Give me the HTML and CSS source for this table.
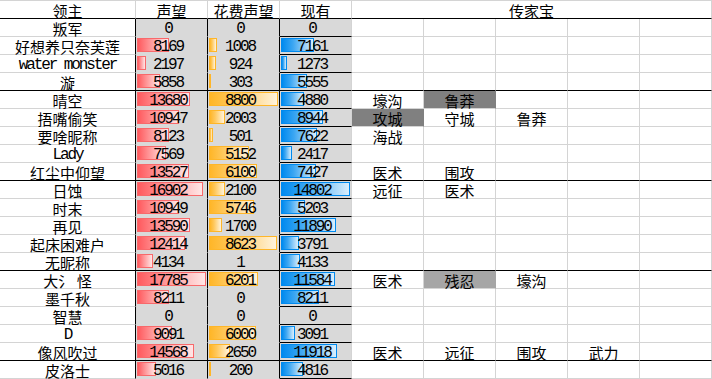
FILE: index.html
```html
<!DOCTYPE html>
<html lang="zh">
<head>
<meta charset="utf-8">
<title>领主声望</title>
<link rel="stylesheet" href="styles.css">
</head>
<body>
<div class="sheet">
  <div class="row head grp">
    <div class="c name">领主</div>
    <div class="c hd">声望</div>
    <div class="c hd">花费声望</div>
    <div class="c hd">现有</div>
    <div class="c heir">传家宝</div>
  </div>

  <div class="row">
    <div class="c name">叛军</div>
    <div class="c b num">0</div>
    <div class="c g num">0</div>
    <div class="c d num">0</div>
    <div class="c e"></div><div class="c e"></div><div class="c e"></div><div class="c e"></div><div class="c e"></div>
  </div>
  <div class="row">
    <div class="c name">好想养只奈芙莲</div>
    <div class="c b num"><i class="bar red" style="width:32px"></i><span>8169</span></div>
    <div class="c g num"><i class="bar org" style="width:8px"></i><span>1008</span></div>
    <div class="c d num"><i class="bar blu" style="width:33px"></i><span>7161</span></div>
    <div class="c e"></div><div class="c e"></div><div class="c e"></div><div class="c e"></div><div class="c e"></div>
  </div>
  <div class="row">
    <div class="c name lat">water monster</div>
    <div class="c b num"><i class="bar red" style="width:9px"></i><span>2197</span></div>
    <div class="c g num"><i class="bar org" style="width:7px"></i><span>924</span></div>
    <div class="c d num"><i class="bar blu" style="width:6px"></i><span>1273</span></div>
    <div class="c e"></div><div class="c e"></div><div class="c e"></div><div class="c e"></div><div class="c e"></div>
  </div>
  <div class="row grp">
    <div class="c name">漩</div>
    <div class="c b num"><i class="bar red" style="width:23px"></i><span>5858</span></div>
    <div class="c g num"><i class="bar org" style="width:2px"></i><span>303</span></div>
    <div class="c d num"><i class="bar blu" style="width:26px"></i><span>5555</span></div>
    <div class="c e"></div><div class="c e"></div><div class="c e"></div><div class="c e"></div><div class="c e"></div>
  </div>

  <div class="row">
    <div class="c name">晴空</div>
    <div class="c b num"><i class="bar red" style="width:53px"></i><span>13680</span></div>
    <div class="c g num"><i class="bar org" style="width:69px"></i><span>8800</span></div>
    <div class="c d num"><i class="bar blu" style="width:23px"></i><span>4880</span></div>
    <div class="c e">壕沟</div><div class="c e dark">鲁莽</div><div class="c e"></div><div class="c e"></div><div class="c e"></div>
  </div>
  <div class="row">
    <div class="c name">捂嘴偷笑</div>
    <div class="c b num"><i class="bar red" style="width:42px"></i><span>10947</span></div>
    <div class="c g num"><i class="bar org" style="width:16px"></i><span>2003</span></div>
    <div class="c d num"><i class="bar blu" style="width:42px"></i><span>8944</span></div>
    <div class="c e dark">攻城</div><div class="c e">守城</div><div class="c e">鲁莽</div><div class="c e"></div><div class="c e"></div>
  </div>
  <div class="row">
    <div class="c name">要啥昵称</div>
    <div class="c b num"><i class="bar red" style="width:32px"></i><span>8123</span></div>
    <div class="c g num"><i class="bar org" style="width:4px"></i><span>501</span></div>
    <div class="c d num"><i class="bar blu" style="width:36px"></i><span>7622</span></div>
    <div class="c e">海战</div><div class="c e"></div><div class="c e"></div><div class="c e"></div><div class="c e"></div>
  </div>
  <div class="row">
    <div class="c name lat">Lady</div>
    <div class="c b num"><i class="bar red" style="width:29px"></i><span>7569</span></div>
    <div class="c g num"><i class="bar org" style="width:40px"></i><span>5152</span></div>
    <div class="c d num"><i class="bar blu" style="width:11px"></i><span>2417</span></div>
    <div class="c e"></div><div class="c e"></div><div class="c e"></div><div class="c e"></div><div class="c e"></div>
  </div>
  <div class="row grp">
    <div class="c name">红尘中仰望</div>
    <div class="c b num"><i class="bar red" style="width:52px"></i><span>13527</span></div>
    <div class="c g num"><i class="bar org" style="width:48px"></i><span>6100</span></div>
    <div class="c d num"><i class="bar blu" style="width:35px"></i><span>7427</span></div>
    <div class="c e">医术</div><div class="c e">围攻</div><div class="c e"></div><div class="c e"></div><div class="c e"></div>
  </div>

  <div class="row">
    <div class="c name">日蚀</div>
    <div class="c b num"><i class="bar red" style="width:66px"></i><span>16902</span></div>
    <div class="c g num"><i class="bar org" style="width:16px"></i><span>2100</span></div>
    <div class="c d num"><i class="bar blu" style="width:69px"></i><span>14802</span></div>
    <div class="c e">远征</div><div class="c e">医术</div><div class="c e"></div><div class="c e"></div><div class="c e"></div>
  </div>
  <div class="row">
    <div class="c name">时末</div>
    <div class="c b num"><i class="bar red" style="width:42px"></i><span>10949</span></div>
    <div class="c g num"><i class="bar org" style="width:45px"></i><span>5746</span></div>
    <div class="c d num"><i class="bar blu" style="width:24px"></i><span>5203</span></div>
    <div class="c e"></div><div class="c e"></div><div class="c e"></div><div class="c e"></div><div class="c e"></div>
  </div>
  <div class="row">
    <div class="c name">再见</div>
    <div class="c b num"><i class="bar red" style="width:53px"></i><span>13590</span></div>
    <div class="c g num"><i class="bar org" style="width:13px"></i><span>1700</span></div>
    <div class="c d num"><i class="bar blu" style="width:55px"></i><span>11890</span></div>
    <div class="c e"></div><div class="c e"></div><div class="c e"></div><div class="c e"></div><div class="c e"></div>
  </div>
  <div class="row">
    <div class="c name">起床困难户</div>
    <div class="c b num"><i class="bar red" style="width:48px"></i><span>12414</span></div>
    <div class="c g num"><i class="bar org" style="width:68px"></i><span>8623</span></div>
    <div class="c d num"><i class="bar blu" style="width:18px"></i><span>3791</span></div>
    <div class="c e"></div><div class="c e"></div><div class="c e"></div><div class="c e"></div><div class="c e"></div>
  </div>
  <div class="row grp">
    <div class="c name">无昵称</div>
    <div class="c b num"><i class="bar red" style="width:16px"></i><span>4134</span></div>
    <div class="c g num"><span>1</span></div>
    <div class="c d num"><i class="bar blu" style="width:19px"></i><span>4133</span></div>
    <div class="c e"></div><div class="c e"></div><div class="c e"></div><div class="c e"></div><div class="c e"></div>
  </div>

  <div class="row">
    <div class="c name">大氵 怪</div>
    <div class="c b num"><i class="bar red" style="width:69px"></i><span>17785</span></div>
    <div class="c g num"><i class="bar org" style="width:49px"></i><span>6201</span></div>
    <div class="c d num"><i class="bar blu" style="width:54px"></i><span>11584</span></div>
    <div class="c e">医术</div><div class="c e light">残忍</div><div class="c e">壕沟</div><div class="c e"></div><div class="c e"></div>
  </div>
  <div class="row">
    <div class="c name">墨千秋</div>
    <div class="c b num"><i class="bar red" style="width:32px"></i><span>8211</span></div>
    <div class="c g num"><span>0</span></div>
    <div class="c d num"><i class="bar blu" style="width:38px"></i><span>8211</span></div>
    <div class="c e"></div><div class="c e"></div><div class="c e"></div><div class="c e"></div><div class="c e"></div>
  </div>
  <div class="row">
    <div class="c name">智慧</div>
    <div class="c b num"><span>0</span></div>
    <div class="c g num"><span>0</span></div>
    <div class="c d num"><span>0</span></div>
    <div class="c e"></div><div class="c e"></div><div class="c e"></div><div class="c e"></div><div class="c e"></div>
  </div>
  <div class="row">
    <div class="c name lat">D</div>
    <div class="c b num"><i class="bar red" style="width:35px"></i><span>9091</span></div>
    <div class="c g num"><i class="bar org" style="width:47px"></i><span>6000</span></div>
    <div class="c d num"><i class="bar blu" style="width:14px"></i><span>3091</span></div>
    <div class="c e"></div><div class="c e"></div><div class="c e"></div><div class="c e"></div><div class="c e"></div>
  </div>
  <div class="row grp">
    <div class="c name">像风吹过</div>
    <div class="c b num"><i class="bar red" style="width:57px"></i><span>14568</span></div>
    <div class="c g num"><i class="bar org" style="width:21px"></i><span>2650</span></div>
    <div class="c d num"><i class="bar blu" style="width:56px"></i><span>11918</span></div>
    <div class="c e">医术</div><div class="c e">远征</div><div class="c e">围攻</div><div class="c e">武力</div><div class="c e"></div>
  </div>

  <div class="row">
    <div class="c name">皮洛士</div>
    <div class="c b num"><i class="bar red" style="width:19px"></i><span>5016</span></div>
    <div class="c g num"><i class="bar org" style="width:2px"></i><span>200</span></div>
    <div class="c d num"><i class="bar blu" style="width:22px"></i><span>4816</span></div>
    <div class="c e"></div><div class="c e"></div><div class="c e"></div><div class="c e"></div><div class="c e"></div>
  </div>
</div>
</body>
</html>
```

FILE: styles.css
```css
html, body {
  margin: 0;
  padding: 0;
  background: #ffffff;
}

.sheet {
  width: 712px;
  border-top: 1px solid #d4d4d4;
  font-family: "Noto Sans CJK SC", "Liberation Mono", sans-serif;
  font-size: 15px;
  color: #000;
}

.row {
  display: grid;
  grid-template-columns: 136px repeat(8, 72px);
  height: 18px;
}

.c {
  box-sizing: border-box;
  height: 18px;
  padding-top: 2px;
  border-right: 1px solid #d4d4d4;
  border-bottom: 1px solid #d4d4d4;
  text-align: center;
  line-height: 15px;
  white-space: nowrap;
  position: relative;
  overflow: visible;
}

.name {
  border-right-color: #000;
}

.lat, .num {
  font-family: "Liberation Mono", monospace;
  font-size: 16px;
  letter-spacing: -2.1px;
  padding-top: 4px;
  line-height: 13px;
}

.num {
  padding-right: 7px;
  background: #d9d9d9;
  border-right-color: #000;
  border-bottom-color: #d9d9d9;
}

.num span {
  position: relative;
}

.d {
  border-right-color: #d4d4d4;
  border-bottom-color: #000;
}

.head .c {
  border-right-color: #d4d4d4;
  background: #fff;
}

.heir {
  grid-column: span 5;
}

.grp .c {
  border-bottom-color: #000;
}

.bar {
  position: absolute;
  left: 1px;
  top: 1px;
  height: 14px;
  box-sizing: border-box;
  border: 1px solid;
}

.red {
  border-color: #f8696b;
  background: linear-gradient(to right, #ff5a5e 0%, #ff8e90 35%, #ffe6e6 100%);
}

.org {
  border-color: #ffb628;
  background: linear-gradient(to right, #ffb628 0%, #ffc85c 35%, #fff3dc 100%);
}

.blu {
  border-color: #008aef;
  background: linear-gradient(to right, #008aef 0%, #3ba6f2 35%, #d9eefd 100%);
}

.dark {
  background: #808080;
  border-right-color: #808080;
}

.light {
  background: #a6a6a6;
  border-right-color: #a6a6a6;
}
```
